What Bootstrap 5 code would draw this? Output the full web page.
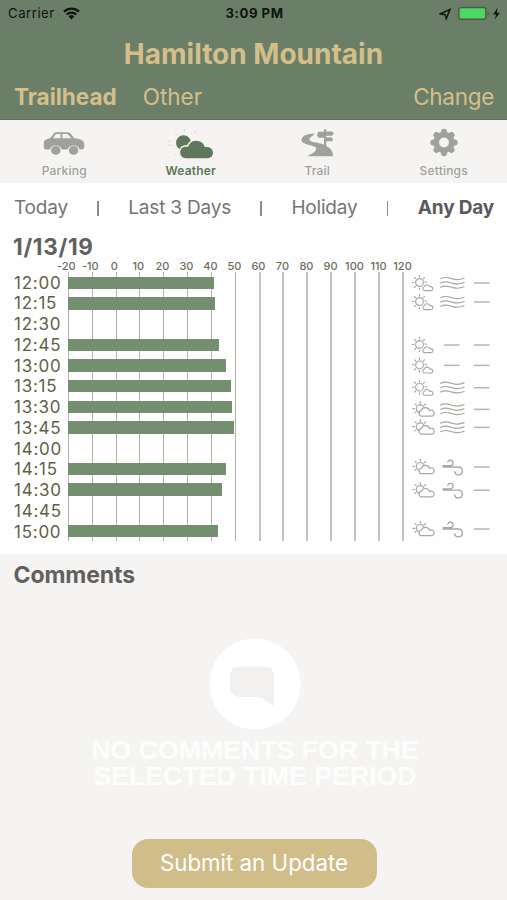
<!DOCTYPE html>
<html lang="en">
<head>
<meta charset="utf-8">
<meta name="viewport" content="width=device-width, initial-scale=1">
<title>Hamilton Mountain</title>
<link href="https://cdn.jsdelivr.net/npm/bootstrap@5.3.0/dist/css/bootstrap.min.css" rel="stylesheet">
<style>
  body{font-family:Inter,"Liberation Sans",sans-serif;background:#fefefe;color:#646464;height:900px;overflow:hidden}
  span,h1,h2,a,button{white-space:nowrap}
  .top-area{background:#6b7f68;height:120px;border-bottom:1px solid #5c6f58;color:#d4bf8b}
  .status{height:27px;color:#10140f;font-size:13.2px;padding:0 6px 0 8px;letter-spacing:.5px}
  .status>div{flex:1 1 0}
  .app-title{font-size:28px;font-weight:700;line-height:54px;letter-spacing:0;height:54px}
  .places{font-size:22.5px;line-height:32px;padding:0 13px 0 14px}
  .places span:nth-child(2){margin-left:26px}
  .places span:nth-child(3){letter-spacing:-.3px}
  .tabs{background:#f5f4f2;height:63px;color:#a0a09d;font-size:12px;font-weight:500;line-height:14px;padding-left:1px;letter-spacing:.2px}
  .tabs a{color:inherit;width:126.5px;padding-top:5px}
  .tabs a.on{color:#5f775b;font-weight:600}
  .tabs svg{height:38px;width:52px;margin-bottom:1px}
  .filters{height:50px;font-size:19px;padding:1px 13px 0 14px;color:#747474;letter-spacing:-.2px}
  .filters i{width:1.5px;height:15px;background:#8b8b8b}
  .filters b{color:#5a5a5a}
  .day{font-size:22.5px;font-weight:700;line-height:28px;padding-left:13px;color:#606060;height:27px;letter-spacing:.7px}
  .axis{margin-left:54.3px;height:12px;margin-top:-.5px;font-size:11px;line-height:12px;font-weight:500;color:#6c6c5c}
  .axis span{width:24.02px;display:flex;justify-content:center}
  .chart{height:282px}
  .hours{width:68px;padding:1px 0 0 14px;font-size:17px;letter-spacing:.75px;color:#5f6147}
  .slot,.sky{height:20.66px}
  .hours span{height:20.75px;line-height:20.75px}
  .plot{display:grid;width:335.6px;height:269.5px}
  .plot>div{grid-area:1/1}
  .plot u{width:2px;border-left:1px solid #b0b3a9}
  .plot u.wide{border-width:2px;border-color:#c3c4bf}
  .fill{height:12.3px;background:#738f70}
  #bars,#skies{padding-top:1px}
  .sky{padding-left:7px}
  .sky svg{overflow:visible;flex:none}
  .talk{background:#f5f4f2;height:347px}
  .talk h2{font-size:23px;font-weight:700;line-height:28px;padding:7px 0 0 13.5px;color:#606060;letter-spacing:-.1px}
  .none-yet{font:700 26.7px/26px "Liberation Sans",Arial,sans-serif;color:#fdfdfc;margin:7px 0 0 3px}
  .bubble{width:92px;height:92px;margin:49px 0 0 3px}
  .send{background:#d0bd89;color:#fff;width:245px;height:49px;border-radius:16px;font-size:22.3px;margin:50px 0 0 1px}
</style>
<script src="https://cdn.jsdelivr.net/npm/bootstrap@5.3.0/dist/js/bootstrap.bundle.min.js"></script>
</head>
<body>
<svg class="d-none">
  <defs>
    <g id="sunny" fill="none" stroke="#a2aba0" stroke-width="1.1" stroke-linecap="round">
      <circle cx="7.500" cy="7.500" r="3.900"/>
      <path d="M7.500.5v1.500M2.500 2.500l1.200 1.200M.4 7.500h1.600M2.500 12.500l1.200-1.200M7.500 14.500v-1.300M12.500 2.500l-1.200 1.200M13 6.800l1.600.6"/>
      <path fill="#fefefe" d="M12.600 15.600h6.200a2 2 0 0 0 .2-4c-.6 0-.8.1-1 .2a3 3 0 0 0-5.600-.3 2.100 2.100 0 0 0 .2 4.100z"/>
    </g>
    <g id="cloudy" fill="none" stroke="#a2aba0" stroke-width="1.200" stroke-linecap="round">
      <circle cx="8.300" cy="7.500" r="4"/>
      <path d="M8.300.3v1.800M3 2.400l1.300 1.300M.8 7.300h1.700M2.900 11.400l.8-.7M13.700 2.400l-1.300 1.300"/>
      <path fill="#fefefe" d="M8.900 14.700h11a3 3 0 0 0 .5-5.700 3.200 3.200 0 0 0-2.600.3 4.600 4.600 0 0 0-8.500-.3 3 3 0 0 0-.4 5.700z"/>
    </g>
    <g id="haze" fill="none" stroke="#a2aba0" stroke-width="1.200" stroke-linecap="round">
      <path d="M.7 3.700C5 1.200 8 2.600 12 3.800s8 1.200 12-.6M.7 8c4.300-2.500 7.300-1.100 11.300.1s8 1.200 12-.6M.7 12.300c4.300-2.500 7.300-1.100 11.300.1s8 1.200 12-.6"/>
    </g>
    <g id="windy" fill="none" stroke="#a2aba0" stroke-width="1.300" stroke-linecap="round">
      <path d="M3 6.600h7.500a2.700 2.700 0 1 0-2.700-3.500M3 8h15.500a3.900 3.900 0 1 1-3.900 4.600"/>
    </g>
    <path id="dash" d="M0 8h15.500" stroke="#b1b8af" stroke-width="1.500"/>
  </defs>
</svg>

<header class="top-area">
  <div class="status d-flex align-items-center">
    <div class="d-flex align-items-center"><span>Carrier</span>
      <svg class="ms-2" width="17" height="13" viewBox="0 0 17 13" fill="none" stroke="#10140f" stroke-width="2.300"><path d="M1 4.600a10.800 10.800 0 0 1 15 0M3.700 7.500a7 7 0 0 1 9.600 0"/><path fill="#10140f" stroke="none" d="M8.500 12.500 5.600 9.500a4.200 4.200 0 0 1 5.800 0z"/></svg>
    </div>
    <span class="fw-bold">3:09 PM</span>
    <div class="d-flex align-items-center justify-content-end">
      <svg width="62" height="16" viewBox="-4 0 62 16"><path d="M-2.800 8 7 3.300 3.200 12.800 2.300 8.800z" fill="none" stroke="#10140f" stroke-width="1.400"/><rect x="15.700" y="1.400" width="27.300" height="12" rx="2.600" fill="#6b7f68" stroke="#4c5b4a" stroke-width="1.200"/><rect x="16.900" y="2.600" width="25" height="9.600" rx="1" fill="#4bd964"/><path d="M44.600 5.300v4.200q1.500-.4 1.500-2.100t-1.500-2.100z" fill="#4c5b4a"/><path d="M54.600 1.800 50 8.400h3.100L51.800 13.500l5-6.700h-3.100z" fill="#10140f"/></svg>
    </div>
  </div>
  <h1 class="app-title text-center m-0">Hamilton Mountain</h1>
  <div class="places d-flex"><span class="fw-bold">Trailhead</span><span>Other</span><span class="ms-auto">Change</span></div>
</header>

<nav class="tabs d-flex">
  <a class="d-flex flex-column align-items-center text-decoration-none" href="#">
    <svg viewBox="0 0 52 38" fill="currentColor"><g transform="translate(1.300 .8) scale(1 .93)"><path d="M14.200 8.500Q15 7 17 7H28.500Q30 7 31.200 8.300L35 13.500Q44.500 14.300 45 19v3.500q-.2 3-3 3h-1.700a6.300 6.300 0 0 0-12 0H22.500a6.300 6.300 0 0 0-12 0H7q-2.500 0-2.500-3V18q0-3 4.500-4.200 2.500-.6 5.200-5.300z"/><path fill="#f5f4f2" d="M16.500 8.800h4.700v4.700h-7.500zM23 8.800h5.200l4 4.700H23z"/><circle cx="16.500" cy="26.500" r="4.700"/><circle cx="34.300" cy="26.500" r="4.700"/></g></svg>
    <span>Parking</span></a>
  <a class="on d-flex flex-column align-items-center text-decoration-none" href="#">
    <svg viewBox="2 0 52 38" fill="currentColor"><path d="M21.500 7V3.500M12 8l2.500 3M9 20l-4 .5M13 29l-1.500 1M31 8l3-3.500M8 16H5" stroke="#d9dcd6" stroke-width="1"/><circle cx="20.500" cy="17.800" r="7.500"/><path stroke="#f5f4f2" stroke-width="1.500" d="M22.500 34a6.600 6.600 0 0 1-1-13q1.500-.3 3 .1a9.500 9.500 0 0 1 17.800.2q8.200-.3 8.500 6.300-.3 6.200-6.300 6.400z"/></svg>
    <span>Weather</span></a>
  <a class="d-flex flex-column align-items-center text-decoration-none" href="#">
    <svg viewBox="0 .8 52 38" fill="currentColor"><path d="M23.500 9.400Q11 10 10.300 15.500c0 4.500 9.700 5 14 7.300 3 1.700-1 6.500-8.300 9.200h26q.3-7.500-9-11.500c-6-2.600-15-2.500-14.500-5.200.3-2.300 3.500-3.300 5-5.900z"/><path d="M33 5h2.200v2.200h6l1.600 2.200-1.600 2.100h-6V13h5l1.600 1.600L41.500 17h-6.300v7L33 22.700V13.500h-5.500L26 11l1-3.500h6z"/></svg>
    <span>Trail</span></a>
  <a class="d-flex flex-column align-items-center text-decoration-none" href="#">
    <svg viewBox="0 1 52 38" fill="none" stroke="currentColor"><circle cx="26" cy="18.500" r="7.800" stroke-width="5.800"/><g stroke-width="6" stroke-linecap="round"><path d="M26 7.800v.4M26 28.800v.4M15.300 18.500h.4M36.300 18.500h.4M18.500 11l.3.3M33.200 25.700l.3.3M33.500 11l-.3.3M18.800 25.700l-.3.3"/></g></svg>
    <span>Settings</span></a>
</nav>

<div class="filters d-flex align-items-center justify-content-between"><span>Today</span><i></i><span>Last 3 Days</span><i></i><span>Holiday</span><i></i><b>Any Day</b></div>

<h2 class="day m-0">1/13/19</h2>
<div class="axis d-flex" id="axis"></div>
<section class="chart d-flex">
  <div class="hours d-flex flex-column" id="hours"></div>
  <div class="plot">
    <div class="d-flex justify-content-between" id="lines"></div>
    <div id="bars"></div>
  </div>
  <div id="skies"></div>
</section>

<section class="talk d-flex flex-column align-items-center">
  <h2 class="m-0 align-self-start">Comments</h2>
  <svg class="bubble" viewBox="0 0 92 92"><circle cx="46" cy="46" r="45.500" fill="#fff"/><path fill="#f2f1ef" d="M32 28.500H55q10 0 10 10V69L54 60.500q-2.500-1.500-5-1.500H32Q21 59 21 48.500V39q0-10.500 11-10.500z"/></svg>
  <div class="none-yet text-center"><span>NO COMMENTS FOR THE</span><br><span>SELECTED TIME PERIOD</span></div>
  <button class="btn send p-0 border-0">Submit an Update</button>
</section>

<script>
  // time, temperature, sky icon, wind icon, icon offset from the row centre
  const readings = [
    ['12:00', 41, 'sunny', 'haze', 0], ['12:15', 41.4, 'sunny', 'haze', -1],
    ['12:30'], ['12:45', 43.4, 'sunny', 'dash', 0],
    ['13:00', 46.4, 'sunny', 'dash', .4], ['13:15', 48.5, 'sunny', 'haze', 1.700],
    ['13:30', 48.800, 'cloudy', 'haze', 2.400], ['13:45', 49.700, 'cloudy', 'haze', .4],
    ['14:00'], ['14:15', 46.4, 'cloudy', 'windy', -2], ['14:30', 44.700, 'cloudy', 'windy', 1.200],
    ['14:45'], ['15:00', 42.700, 'cloudy', 'windy', -2]
  ];
  const put = (id, html) => document.getElementById(id).innerHTML = html;
  const ticks = Array.from({length: 15}, (_, i) => i * 10 - 20);
  put('axis', ticks.map(t => `<span>${t}</span>`).join(''));
  put('lines', ticks.map(t => `<u class="${t > 50 ? 'wide' : ''}"></u>`).join(''));
  put('hours', readings.map(r => `<span>${r[0]}</span>`).join(''));
  put('bars', readings.map(r => `<div class="slot d-flex align-items-center">${
    r[1] ? `<div class="fill" style="width:${(r[1] + 20) * 2.386}px"></div>` : ''}</div>`).join(''));
  const icon = (name, w, x) => `<svg width="${w}" height="16"><use href="#${name}" x="${x}"/></svg>`;
  put('skies', readings.map(r => `<div class="sky d-flex align-items-center">${r[2] ?
    `<div class="d-flex" style="transform:translateY(${r[4]}px)">${icon(r[2], 29, 1)}${
      icon(r[3], 34, r[3] === 'dash' ? 4 : 0)}${icon('dash', 17, 0)}</div>` : ''}</div>`).join(''));
</script>
</body>
</html>
